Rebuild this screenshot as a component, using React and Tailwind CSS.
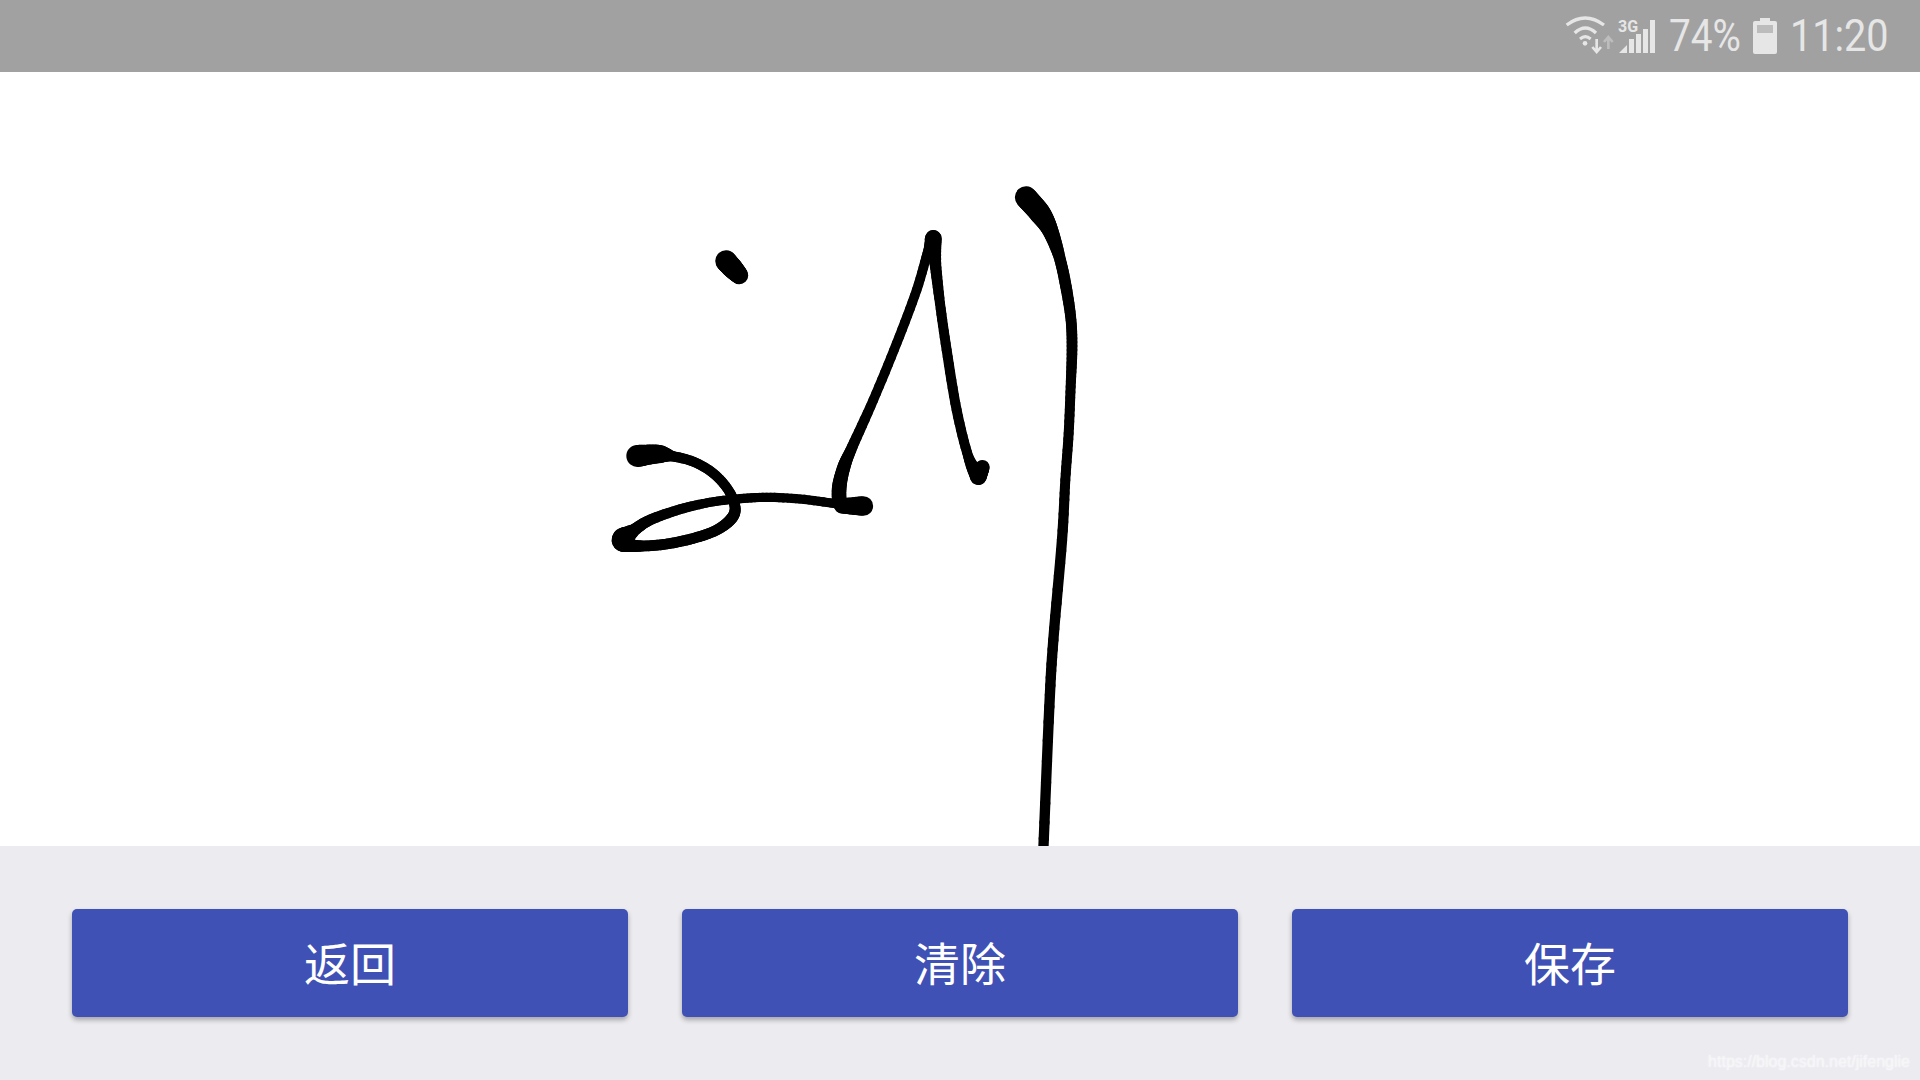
import React from "react";

const strokes = [
  // dot
  [[438,273,56],[458,295,54],[478,316,46]],
  // hook, loop and line to triangle
  [[172,858,58],[235,852,48],[275,858,27],[340,875,26],[400,910,26],[445,960,26],[465,1010,28],[455,1045,30],[410,1080,28],[340,1105,28],[260,1122,28],[190,1128,28],[140,1124,36],[128,1108,58],[160,1082,32],[210,1050,28],[300,1018,26],[390,997,24],[470,987,24],[560,982,24],[660,987,24],[760,1000,24]],
  // foot
  [[785,1008,38],[850,1008,52]],
  // triangle left leg
  [[778,1000,38],[778,950,38],[792,890,34],[817,830,28],[880,690,25],[950,520,25],[1010,360,25],[1045,240,25],[1060,205,44]],
  // triangle right leg
  [[1060,205,44],[1066,280,30],[1080,400,26],[1100,540,26],[1130,720,26],[1165,860,26],[1195,920,44]],
  [[1195,920,44],[1207,892,38]],
  // long stroke
  [[1338,82,58],[1380,130,56],[1410,180,42],[1438,260,30],[1458,350,30],[1473,450,28],[1476,540,28],[1472,650,26],[1466,790,26],[1456,930,26],[1446,1110,27],[1420,1410,27],[1408,1610,27],[1390,2040,27]],
];

function catmull(points) {
  const out = [];
  for (let i = 0; i < points.length - 1; i++) {
    const p0 = points[Math.max(i - 1, 0)];
    const p1 = points[i];
    const p2 = points[i + 1];
    const p3 = points[Math.min(i + 2, points.length - 1)];
    for (let s = 0; s < 8; s++) {
      const t = s / 8;
      const f = (a, b, c, d) =>
        0.5 * (2 * b + (c - a) * t + (2 * a - 5 * b + 4 * c - d) * t * t + (3 * b - a - 3 * c + d) * t * t * t);
      out.push([f(p0[0], p1[0], p2[0], p3[0]), f(p0[1], p1[1], p2[1], p3[1]), p1[2] + (p2[2] - p1[2]) * t]);
    }
  }
  out.push(points[points.length - 1]);
  return out;
}

function Ink({ points }) {
  const pts = catmull(points);
  return pts.slice(1).map((p, i) => (
    <line key={i} x1={pts[i][0]} y1={pts[i][1]} x2={p[0]} y2={p[1]} strokeWidth={((pts[i][2] + p[2]) / 2) * 1.15} stroke="#000" strokeLinecap="round" />
  ));
}

function Wifi() {
  return (
    <svg className="w-[50px] h-[40px] shrink-0" viewBox="15 15 150 120" fill="none">
      <path d="M20 42 Q75 0 132 42" stroke="#e6e6e6" strokeWidth="10" />
      <path d="M44 66 Q76 36 108 66" stroke="#e6e6e6" strokeWidth="10" />
      <path d="M60 84 Q76 70 92 84" stroke="#e6e6e6" strokeWidth="9" />
      <circle cx="75" cy="97" r="7" fill="#e6e6e6" />
      <path d="M110 84V122M97 108L110 123L123 108" stroke="#e6e6e6" strokeWidth="8" />
      <path d="M145 114V80M132 93L145 78L158 93" stroke="#bdbdbd" strokeWidth="8" />
    </svg>
  );
}

function Signal() {
  return (
    <div className="relative w-[37px] h-[34px] shrink-0">
      <span className="absolute left-0 top-0 text-[16px] leading-[16px] font-bold text-[#e6e6e6] [font-family:Roboto,sans-serif]">3G</span>
      <svg className="absolute inset-0 w-full h-full" viewBox="0 0 37 34" fill="#e6e6e6">
        <path d="M1 34L9 26V34Z" />
        <rect x="11" y="20" width="5" height="14" />
        <rect x="18" y="15" width="5" height="19" />
        <rect x="25" y="10" width="5" height="24" />
        <rect x="32" y="1" width="5" height="33" />
      </svg>
    </div>
  );
}

function Battery() {
  return (
    <svg className="w-[24px] h-[36px] shrink-0" viewBox="0 0 24 36" fill="#e6e6e6">
      <path d="M7 0H17V3H22Q24 3 24 5V34Q24 36 22 36H2Q0 36 0 34V5Q0 3 2 3H7Z" />
      <rect x="4" y="7" width="16" height="8" fill="#bcbcbc" />
    </svg>
  );
}

function Btn({ children }) {
  return (
    <button className="flex-1 h-[108px] pb-[4px] rounded-[5px] bg-[#3f51b5] text-white text-[46px] leading-none shadow-[0_3px_5px_rgba(0,0,0,0.3)] flex items-center justify-center">
      {children}
    </button>
  );
}

export default function App() {
  return (
    <div className="relative w-[1920px] h-[1080px] flex flex-col bg-white overflow-hidden [font-family:'Noto_Sans_CJK_SC','Noto_Sans',sans-serif]">
      <div className="h-[72px] shrink-0 bg-[#a1a1a1] flex items-center justify-end pr-[33px] text-[#e6e6e6] [font-family:Roboto,sans-serif] text-[44px] leading-none">
        <Wifi />
        <div className="ml-[3px]"><Signal /></div>
        <span className="ml-[14px] w-[70px] whitespace-nowrap origin-left scale-x-[0.88]">74%</span>
        <div className="ml-[14px]"><Battery /></div>
        <span className="ml-[13px] w-[97px] whitespace-nowrap origin-left scale-x-[0.9]">11:20</span>
      </div>
      <div className="flex-1 min-h-0 bg-white">
        <svg className="block w-full h-full" viewBox="0 72 1920 774" fill="none">
          <g transform="translate(580 170) scale(0.33333)">
            {strokes.map((s, i) => (
              <Ink key={i} points={s} />
            ))}
          </g>
        </svg>
      </div>
      <div className="h-[234px] shrink-0 bg-[#ecebf0] flex items-center gap-[54px] px-[72px]">
        <Btn>返回</Btn>
        <Btn>清除</Btn>
        <Btn>保存</Btn>
      </div>
      <span className="absolute right-[10px] top-[1052px] text-[16px] leading-[20px] text-[#f6f6f8] [font-family:'Liberation_Sans',sans-serif] [text-shadow:0_0_2px_rgba(255,255,255,0.8)]">
        https://blog.csdn.net/jifenglie
      </span>
    </div>
  );
}
